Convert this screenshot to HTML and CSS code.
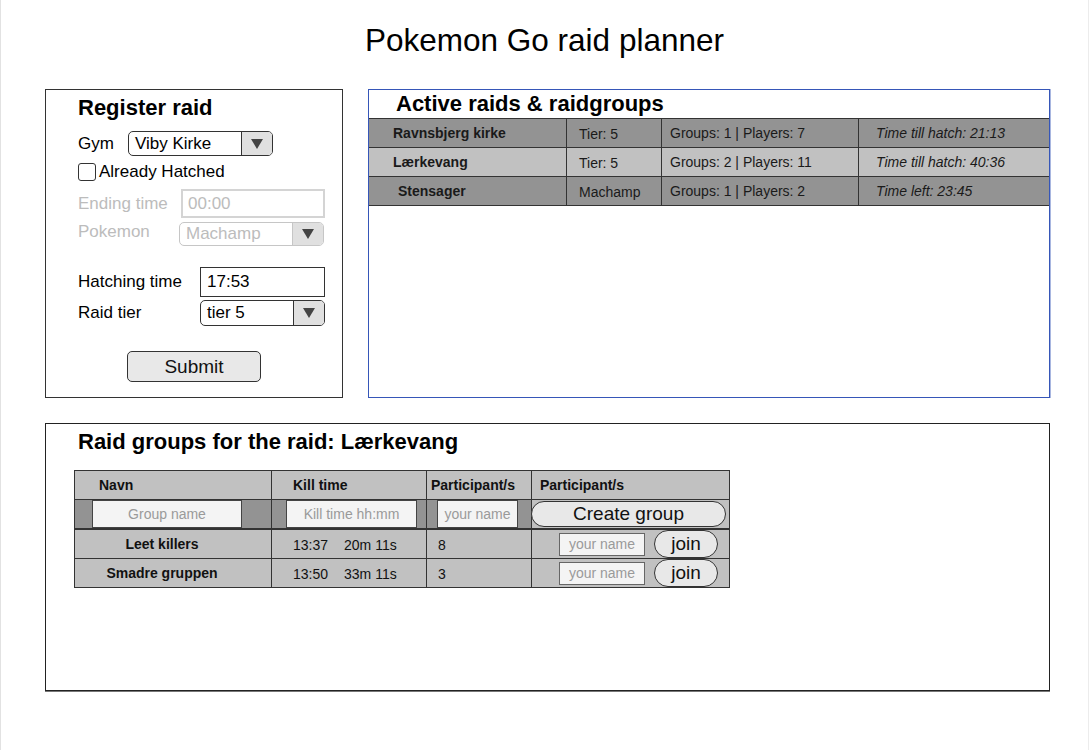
FILE: index.html
```html
<!DOCTYPE html>
<html lang="en">
<head>
<meta charset="utf-8">
<title>Pokemon Go raid planner</title>
<link rel="stylesheet" href="styles.css">
</head>
<body>
<div class="page">
  <h1 class="title">Pokemon Go raid planner</h1>

  <div class="top">
    <section class="register">
      <h2 class="box-title">Register raid</h2>

      <div class="field f-gym">
        <span class="lbl">Gym</span>
        <div class="select sel-gym">
          <span class="sel-text">Viby Kirke</span>
          <span class="sel-arrow"><svg width="12" height="10" viewBox="0 0 12 10"><polygon points="0,0 12,0 6,10" fill="#444"/></svg></span>
        </div>
      </div>

      <div class="field f-check">
        <span class="check"></span>
        <span class="check-lbl">Already Hatched</span>
      </div>

      <div class="field f-end disabled">
        <span class="lbl">Ending time</span>
        <div class="input in-end">00:00</div>
      </div>

      <div class="field f-poke disabled">
        <span class="lbl">Pokemon</span>
        <div class="select sel-poke">
          <span class="sel-text">Machamp</span>
          <span class="sel-arrow"><svg width="12" height="10" viewBox="0 0 12 10"><polygon points="0,0 12,0 6,10" fill="#444"/></svg></span>
        </div>
      </div>

      <div class="field f-hatch">
        <span class="lbl">Hatching time</span>
        <div class="input in-hatch">17:53</div>
      </div>

      <div class="field f-tier">
        <span class="lbl">Raid tier</span>
        <div class="select sel-tier">
          <span class="sel-text">tier 5</span>
          <span class="sel-arrow"><svg width="12" height="10" viewBox="0 0 12 10"><polygon points="0,0 12,0 6,10" fill="#444"/></svg></span>
        </div>
      </div>

      <button class="btn submit" type="button">Submit</button>
    </section>

    <section class="active">
      <h2 class="box-title active-title">Active raids &amp; raidgroups</h2>
      <div class="raids">
        <div class="raid dark">
          <div class="rc rc1"><b>Ravnsbjerg kirke</b></div>
          <div class="rc rc2">Tier: 5</div>
          <div class="rc rc3">Groups: 1 | Players: 7</div>
          <div class="rc rc4"><i>Time till hatch: 21:13</i></div>
        </div>
        <div class="raid light">
          <div class="rc rc1"><b>Lærkevang</b></div>
          <div class="rc rc2">Tier: 5</div>
          <div class="rc rc3">Groups: 2 | Players: 11</div>
          <div class="rc rc4"><i>Time till hatch: 40:36</i></div>
        </div>
        <div class="raid dark">
          <div class="rc rc1 indent"><b>Stensager</b></div>
          <div class="rc rc2">Machamp</div>
          <div class="rc rc3">Groups: 1 | Players: 2</div>
          <div class="rc rc4"><i>Time left: 23:45</i></div>
        </div>
      </div>
    </section>
  </div>

  <section class="groups">
    <h2 class="box-title">Raid groups for the raid: Lærkevang</h2>
    <div class="gtable">
      <div class="grow ghead">
        <div class="gc gc1 pad-navn">Navn</div>
        <div class="gc gc2 pad-kill">Kill time</div>
        <div class="gc gc3 pad-p1">Participant/s</div>
        <div class="gc gc4 pad-p2">Participant/s</div>
      </div>
      <div class="grow ginput">
        <div class="gc gc1"><div class="fake-in in-group">Group name</div></div>
        <div class="gc gc2"><div class="fake-in in-kill">Kill time hh:mm</div></div>
        <div class="gc gc3"><div class="fake-in in-name">your name</div></div>
        <div class="gc gc4"><button class="btn pill create" type="button">Create group</button></div>
      </div>
      <div class="grow gdata">
        <div class="gc gc1 name-cell"><b>Leet killers</b></div>
        <div class="gc gc2 pad-kill"><span>13:37</span><span class="left">20m 11s</span></div>
        <div class="gc gc3 pad-count">8</div>
        <div class="gc gc4"><div class="fake-in join-in">your name</div><button class="btn pill join" type="button">join</button></div>
      </div>
      <div class="grow gdata last">
        <div class="gc gc1 name-cell"><b>Smadre gruppen</b></div>
        <div class="gc gc2 pad-kill"><span>13:50</span><span class="left">33m 11s</span></div>
        <div class="gc gc3 pad-count">3</div>
        <div class="gc gc4"><div class="fake-in join-in">your name</div><button class="btn pill join" type="button">join</button></div>
      </div>
    </div>
  </section>
</div>
</body>
</html>
```

FILE: styles.css
```css
* { box-sizing: border-box; }

html, body {
  margin: 0;
  padding: 0;
  background: #fff;
}

body {
  font-family: "Liberation Sans", Arial, sans-serif;
  color: #000;
}

.page {
  width: 1089px;
  height: 750px;
  border-left: 1px solid #e2e2e2;
  border-right: 1px solid #ececec;
  overflow: hidden;
}

.title {
  margin: 0;
  padding-top: 22px;
  height: 58px;
  line-height: 36px;
  font-size: 31.5px;
  font-weight: normal;
  text-align: center;
}

.top {
  display: flex;
  gap: 25px;
  margin: 31px 0 0 44px;
}

.box-title {
  margin: 6px 0 0 0;
  height: 24px;
  line-height: 24px;
  font-size: 22px;
  font-weight: bold;
}

/* Register raid */
.register {
  width: 298px;
  height: 309px;
  border: 1px solid #333;
  padding-left: 32px;
  font-size: 17px;
}

.field {
  display: flex;
  align-items: center;
}

.lbl { flex: none; }

.f-gym { margin-top: 11px; height: 25px; }
.f-gym .lbl { width: 50px; }
.f-check { margin-top: 7px; height: 18px; }
.f-end { margin-top: 8px; height: 29px; }
.f-end .lbl { width: 103px; }
.f-poke { margin-top: 4px; height: 24px; align-items: flex-start; }
.f-poke .lbl { width: 101px; line-height: 20px; }
.f-hatch { margin-top: 21px; height: 30px; }
.f-hatch .lbl { width: 122px; }
.f-tier { margin-top: 3px; height: 26px; }
.f-tier .lbl { width: 122px; }

.disabled .lbl { color: #bcbcbc; }

.select {
  display: flex;
  height: 100%;
  border: 1px solid #333;
  border-radius: 5px;
  overflow: hidden;
  background: #fff;
}
.sel-text {
  flex: 1;
  display: flex;
  align-items: center;
  padding-left: 6px;
}
.sel-arrow {
  flex: none;
  width: 31px;
  display: flex;
  align-items: center;
  justify-content: center;
  background: #e0e0e0;
  border-left: 1px solid #333;
}
.sel-gym { width: 145px; }
.sel-poke { width: 145px; border-color: #c6c6c6; color: #bcbcbc; }
.sel-poke .sel-arrow { border-left-color: #c6c6c6; }
.sel-tier { width: 125px; }

.input {
  height: 100%;
  display: flex;
  align-items: center;
  padding-left: 6px;
  border: 1px solid #333;
  background: #fff;
}
.in-end { width: 144px; border: 2px solid #d4d4d4; padding-left: 5px; color: #bcbcbc; }
.in-hatch { width: 125px; }

.check {
  width: 18px;
  height: 18px;
  border: 1px solid #333;
  border-radius: 3px;
  flex: none;
}
.check-lbl { margin-left: 3px; }

.btn {
  font-family: "Liberation Sans", Arial, sans-serif;
  color: #111;
  background: #e8e8e8;
  border: 1px solid #333;
  padding: 0;
  cursor: default;
}

.submit {
  display: block;
  margin: 25px 0 0 49px;
  width: 134px;
  height: 31px;
  border-radius: 5px;
  font-size: 19px;
}

/* Active raids */
.active {
  width: 682px;
  height: 309px;
  border: 1px solid #3656b8;
  box-shadow: 1px 0 0 #a8b6e0;
}
.active-title {
  margin: 0;
  height: 29px;
  line-height: 27px;
  padding-left: 27px;
  border-bottom: 1px solid #333;
}

.raid {
  display: grid;
  grid-template-columns: 198px 95px 197px 1fr;
  height: 29px;
  border-bottom: 1px solid #333;
  font-size: 14px;
  color: #1a1a1a;
}
.raid.dark { background: #939393; }
.raid.light { background: #c1c1c1; }

.rc {
  display: flex;
  align-items: center;
  border-right: 1px solid #333;
  white-space: nowrap;
}
.rc4 { border-right: none; }
.rc1 { padding-left: 24px; }
.rc1.indent { padding-left: 29px; }
.rc2 { padding-left: 12px; padding-top: 2px; }
.rc3 { padding-left: 8px; }
.rc4 { padding-left: 17px; }

/* Raid groups */
.groups {
  margin: 25px 0 0 44px;
  width: 1005px;
  height: 268px;
  border: 1px solid #222;
  box-shadow: 0 1px 0 #777;
  padding-left: 32px;
}

.gtable {
  margin: 16px 0 0 -4px;
  width: 656px;
  border: 1px solid #333;
  font-size: 14px;
  color: #111;
}

.grow {
  display: grid;
  grid-template-columns: 197px 155px 105px 1fr;
  height: 29px;
  border-bottom: 1px solid #333;
  background: #c1c1c1;
}
.grow.ginput {
  height: 30px;
  border-bottom: 2px solid #333;
  background: #939393;
}
.grow.last { height: 28px; border-bottom: none; }

.gc {
  display: flex;
  align-items: center;
  border-right: 1px solid #333;
  white-space: nowrap;
}
.gc4 { border-right: none; }

.ghead .gc { font-weight: bold; }
.pad-navn { padding-left: 24px; }
.pad-kill { padding-left: 21px; }
.pad-p1 { padding-left: 4px; }
.pad-p2 { padding-left: 8px; }
.pad-count { padding-left: 11px; padding-top: 2px; }
.gdata .pad-kill { padding-top: 2px; }
.left { margin-left: 16px; }

.name-cell { justify-content: center; padding-right: 22px; }

.fake-in {
  display: flex;
  align-items: center;
  justify-content: center;
  background: #f4f4f4;
  border: 1px solid #444;
  color: #9a9a9a;
  font-size: 14px;
}
.in-group { margin-left: 17px; width: 150px; height: 28px; }
.in-kill { margin-left: 14px; width: 131px; height: 28px; }
.in-name { margin-left: 10px; width: 81px; height: 28px; }
.ginput .gc4 { background: #c1c1c1; }

.pill { border-radius: 14px; }
.create {
  margin-left: -1px;
  width: 195px;
  height: 26px;
  font-size: 19px;
}
.join-in { margin-left: 27px; width: 86px; height: 23px; border-color: #666; }
.join {
  margin-left: 9px;
  width: 64px;
  height: 28px;
  font-size: 19px;
}
```
